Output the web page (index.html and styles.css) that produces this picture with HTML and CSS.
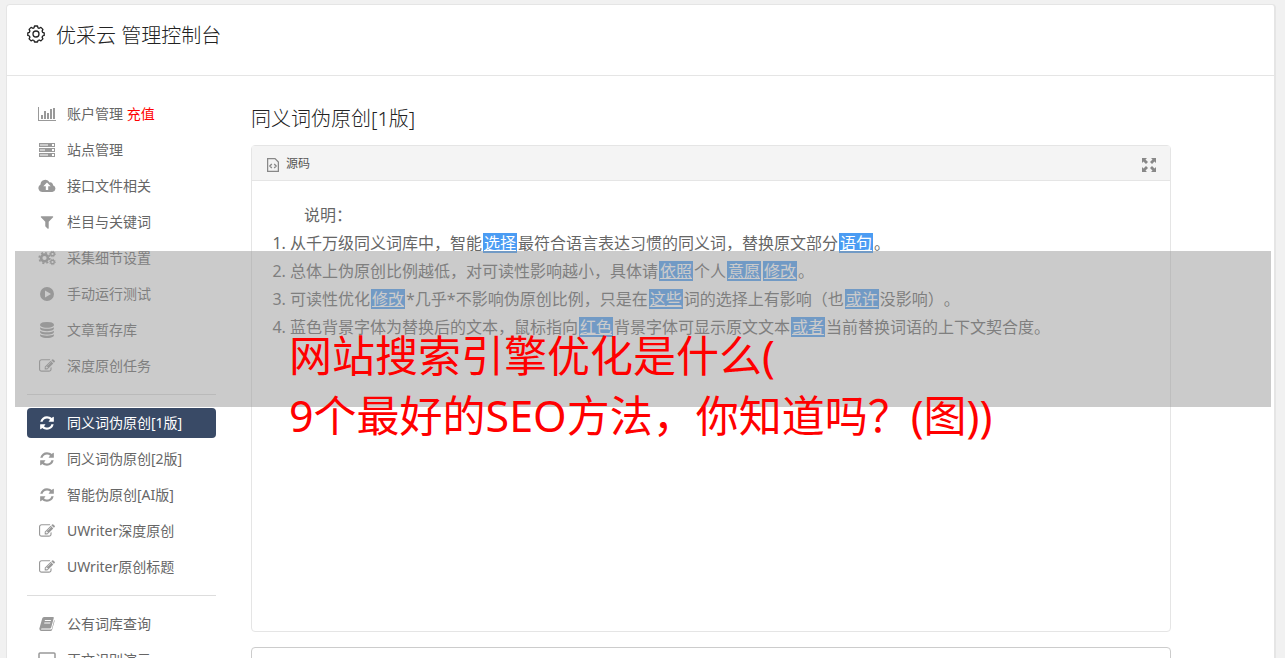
FILE: index.html
```html
<!DOCTYPE html>
<html lang="zh-CN">
<head>
  <meta charset="UTF-8" />
  <meta name="viewport" content="width=device-width, initial-scale=1.0"/>
  <title>优采云 管理控制台</title>
  <link rel="stylesheet" href="styles.css">
</head>
<body>
  <!-- icon set -->
  <svg class="sprite" aria-hidden="true">
    <symbol id="i-chart" viewBox="0 0 18 16"><path d="M0 1h1v13h17v1H0zM3 9h2v4H3zM6 5h2v8H6zM9 7h2v6H9zM12 3h2v10h-2zM15 2h2v11h-2z"/></symbol>
    <symbol id="i-server" viewBox="0 0 18 16"><path fill-rule="evenodd" d="M1 1h16v4H1zM2 2.500v1h8v-1zM14 2v2h2V2zM1 6h16v4H1zM2 7.500v1h5v-1zM14 7v2h2V7zM1 11h16v4H1zM2 12.500v1h8v-1zM14 12v2h2v-2z"/></symbol>
    <symbol id="i-cloud" viewBox="0 0 18 16"><path fill-rule="evenodd" d="M4.500 14A4 4 0 0 1 2.500 6.500 4.800 4.800 0 0 1 11.600 4.500 2.600 2.600 0 0 1 15 7.200 3.500 3.500 0 0 1 14.300 14zM9 4.500L5.300 8.300H7.800V12h2.400V8.300h2.500z"/></symbol>
    <symbol id="i-filter" viewBox="-112 0 2016 1792"><path d="M1595 295q17 41-14 70l-493 493v742q0 42-39 59-13 5-25 5-27 0-45-19l-256-256q-19-19-19-45v-486l-493-493q-31-29-14-70 17-39 59-39h1280q42 0 59 39z"/></symbol>
    <symbol id="i-cogs" viewBox="0 0 18 16"><g fill="none" stroke="currentColor"><circle cx="6.500" cy="8" r="3.400" stroke-width="2.600"/><circle cx="6.500" cy="8" r="5.300" stroke-width="1.700" stroke-dasharray="2.080 2.080"/><circle cx="14.500" cy="4" r="1.800" stroke-width="1.400"/><circle cx="14.500" cy="4" r="2.800" stroke-width="1" stroke-dasharray="1.100 1.100"/><circle cx="14.500" cy="12" r="1.800" stroke-width="1.400"/><circle cx="14.500" cy="12" r="2.800" stroke-width="1" stroke-dasharray="1.100 1.100"/></g></symbol>
    <symbol id="i-play" viewBox="0 0 18 16"><path fill-rule="evenodd" d="M9 1a7 7 0 1 0 0 14A7 7 0 0 0 9 1zM7 4.600L13 8l-6 3.400z"/></symbol>
    <symbol id="i-database" viewBox="-112 0 2016 1792"><path d="M896 768q237 0 443-43t325-127v170q0 69-103 128t-280 93.500-385 34.500-385-34.500-280-93.500-103-128v-170q119 84 325 127t443 43zm0 768q237 0 443-43t325-127v170q0 69-103 128t-280 93.500-385 34.500-385-34.500-280-93.500-103-128v-170q119 84 325 127t443 43zm0-384q237 0 443-43t325-127v170q0 69-103 128t-280 93.500-385 34.500-385-34.500-280-93.500-103-128v-170q119 84 325 127t443 43zm0-1152q208 0 385 34.500t280 93.500 103 128v128q0 69-103 128t-280 93.500-385 34.500-385-34.500-280-93.500-103-128v-128q0-69 103-128t280-93.500 385-34.500z"/></symbol>
    <symbol id="i-edit" viewBox="-112 0 2016 1792"><path d="M888 1184l116-116-152-152-116 116v56h96v96h56zm440-720q-16-16-33 1l-350 350q-17 17-1 33t33-1l350-350q17-17 1-33zm80 594v190q0 119-84.500 203.500t-203.500 84.500h-832q-119 0-203.500-84.500t-84.500-203.500v-832q0-119 84.500-203.500t203.500-84.500h832q63 0 117 25 15 7 18 23 3 17-9 29l-49 49q-14 14-32 8-23-6-45-6h-832q-66 0-113 47t-47 113v832q0 66 47 113t113 47h832q66 0 113-47t47-113v-126q0-13 9-22l64-64q15-15 35-7t20 29zm-96-738l288 288-672 672h-288v-288zm444 132l-92 92-288-288 92-92q28-28 68-28t68 28l152 152q28 28 28 68t-28 68z"/></symbol>
    <symbol id="i-refresh" viewBox="-112 0 2016 1792"><path d="M1639 1056q0 5-1 7-64 268-268 434.500t-478 166.500q-146 0-282.500-55t-243.500-157l-129 129q-19 19-45 19t-45-19-19-45v-448q0-26 19-45t45-19h448q26 0 45 19t19 45-19 45l-137 137q71 66 161 102t187 36q134 0 250-65t186-179q11-17 53-117 8-23 30-23h192q13 0 22.500 9.500t9.500 22.500zm25-800v448q0 26-19 45t-45 19h-448q-26 0-45-19t-19-45 19-45l138-138q-148-137-349-137-134 0-250 65t-186 179q-11 17-53 117-8 23-30 23h-199q-13 0-22.500-9.500t-9.500-22.500v-7q65-268 270-434.500t480-166.500q146 0 284 55.500t245 156.500l130-129q19-19 45-19t45 19 19 45z"/></symbol>
    <symbol id="i-book" viewBox="0 0 18 16"><path fill-rule="evenodd" d="M6 1h9q1 0 .8 1L13.200 11.500q-.3 1-1.200 1H4q-1.300 0-.9 1H13q.6 0 .9-.8L16.200 4q.6.300.4 1L14.200 13.500q-.4 1.500-1.800 1.500H3.500Q1.500 15 1.300 12.800L4.200 2.500Q4.600 1 6 1zM7 4l-.3 1h6l.3-1zM6.400 6.500l-.3 1h6l.3-1z"/></symbol>
    <symbol id="i-laptop" viewBox="0 0 18 16"><rect x="1" y="1" width="16" height="11" rx="1" fill="none" stroke="currentColor" stroke-width="1.500"/><path d="M0 13h18v2H0z"/></symbol>
  </svg>

  <div class="page">
    <header class="page-header">
      <svg class="gear" viewBox="0 0 18 18" fill="none" stroke="currentColor" stroke-width="1.300" stroke-linejoin="round" aria-hidden="true">
        <path d="M7.500 1h3l.5 1.800 1.200.5 1.700-.9 2 2-.8 1.700.5 1.200 1.600.6v2.500l-1.600.6-.5 1.200.8 1.700-2 2-1.700-.9-1.200.5-.5 1.500h-3l-.5-1.500-1.200-.5-1.700.9-2-2 .8-1.700-.5-1.200L.8 10.400V7.900l1.600-.6.5-1.200-.8-1.700 2-2 1.700.9L7 2.800z"/>
        <circle cx="9" cy="9" r="3"/>
      </svg>
      <h1>优采云 管理控制台</h1>
    </header>

    <div class="layout">
      <nav class="sidebar">
        <ul>
          <li><a href="#"><svg><use href="#i-chart"/></svg><span>账户管理 <em>充值</em></span></a></li>
          <li><a href="#"><svg><use href="#i-server"/></svg>站点管理</a></li>
          <li><a href="#"><svg><use href="#i-cloud"/></svg>接口文件相关</a></li>
          <li><a href="#"><svg><use href="#i-filter"/></svg>栏目与关键词</a></li>
          <li><a href="#"><svg><use href="#i-cogs"/></svg>采集细节设置</a></li>
          <li><a href="#"><svg><use href="#i-play"/></svg>手动运行测试</a></li>
          <li><a href="#"><svg><use href="#i-database"/></svg>文章暂存库</a></li>
          <li><a href="#"><svg><use href="#i-edit"/></svg>深度原创任务</a></li>
        </ul>
        <ul>
          <li><a href="#" class="active"><svg><use href="#i-refresh"/></svg>同义词伪原创[1版]</a></li>
          <li><a href="#"><svg><use href="#i-refresh"/></svg>同义词伪原创[2版]</a></li>
          <li><a href="#"><svg><use href="#i-refresh"/></svg>智能伪原创[AI版]</a></li>
          <li><a href="#"><svg><use href="#i-edit"/></svg>UWriter深度原创</a></li>
          <li><a href="#"><svg><use href="#i-edit"/></svg>UWriter原创标题</a></li>
        </ul>
        <ul>
          <li><a href="#"><svg><use href="#i-book"/></svg>公有词库查询</a></li>
          <li><a href="#"><svg><use href="#i-laptop"/></svg>正文识别演示</a></li>
        </ul>
      </nav>

      <main class="content">
        <h2>同义词伪原创[1版]</h2>
        <div class="editor">
          <div class="toolbar">
            <button type="button">
              <svg width="12" height="14" viewBox="0 0 12 14" fill="none" stroke="#888" stroke-width="1.300" aria-hidden="true"><path d="M.6.600h7.400l3.400 3.400v9.400H.6zM4.800 6L2.800 8l2 2M7.200 6l2 2-2 2"/></svg>
              源码
            </button>
            <button type="button" aria-label="全屏">
              <svg width="14" height="14" viewBox="0 0 14 14" fill="#888" aria-hidden="true"><path d="M0 0h5L3.500 1.500 6 4 4 6 1.500 3.500 0 5zM14 0v5l-1.500-1.500L10 6 8 4l2.500-2.500L9 0zM0 14V9l1.500 1.500L4 8l2 2-2.500 2.500L5 14zM14 14H9l1.500-1.500L8 10l2-2 2.500 2.500L14 9z"/></svg>
            </button>
          </div>
          <div class="editor-body">
            <p>说明：</p>
            <ol>
              <li>从千万级同义词库中，智能<u>选择</u>最符合语言表达习惯的同义词，替换原文部分<u>语句</u>。</li>
              <li>总体上伪原创比例越低，对可读性影响越小，具体请<u>依照</u>个人<u>意愿</u><u>修改</u>。</li>
              <li>可读性优化<u>修改</u>*几乎*不影响伪原创比例，只是在<u>这些</u>词的选择上有影响（也<u>或许</u>没影响）。</li>
              <li>蓝色背景字体为替换后的文本，鼠标指向<u>红色</u>背景字体可显示原文文本<u>或者</u>当前替换词语的上下文契合度。</li>
            </ol>
          </div>
        </div>
        <textarea class="source" aria-label="原文"></textarea>
      </main>
    </div>
  </div>

  <div class="banner">
    <p>网站搜索引擎优化是什么(<br>9个最好的SEO方法，你知道吗？(图))</p>
  </div>
</body>
</html>
```
FILE: styles.css
```css
* {
  box-sizing: border-box;
}
body {
  position: relative;
  margin: 0;
  padding: 4px 9px 0 6px;
  background: #f1f1f1;
  color: #666;
  font-family: "Noto Sans", "Noto Sans CJK SC", sans-serif;
  font-size: 14px;
  text-spacing-trim: space-all;
}
h1, h2, p, ul, ol {
  margin: 0;
  padding: 0;
  font-weight: normal;
}
.sprite {
  display: none;
}
.page {
  background: white;
  border: 1px solid #e5e5e5;
  border-right-width: 2px;
  border-radius: 4px;
}

/* header */
.page-header {
  display: flex;
  align-items: flex-start;
  gap: 11px;
  padding: 16px 20px 24px;
  border-bottom: 1px solid #e5e5e5;
  color: #222;
}
.page-header h1 {
  font-size: 20px;
  line-height: 30px;
  font-weight: 300;
}
.gear {
  width: 18px;
  height: 18px;
  margin-top: 4px;
}
.layout {
  display: flex;
  gap: 35px;
  padding: 23px 20px;
}

/* left menu */
.sidebar {
  flex: none;
  width: 189px;
}
.sidebar ul {
  display: flex;
  flex-direction: column;
  gap: 6px;
  list-style: none;
}
.sidebar ul + ul {
  margin-top: 13px;
  padding-top: 13px;
  border-top: 1px solid #ddd;
}
.sidebar a {
  display: flex;
  align-items: center;
  gap: 11px;
  padding: 0 11px;
  line-height: 30px;
  border-radius: 4px;
  color: #666;
  text-decoration: none;
}
.sidebar svg {
  width: 18px;
  height: 16px;
  color: #999;
  fill: currentColor;
}
.sidebar em {
  color: red;
  font-style: normal;
}
.sidebar .active,
.sidebar .active svg {
  background: #394a66;
  color: white;
}

/* editor */
.content {
  flex: 1;
  max-width: 920px;
}
.content h2 {
  padding: 5px 0 11px;
  color: #222;
  font-size: 20px;
  line-height: 30px;
  font-weight: 300;
}
.editor {
  min-height: 487px;
  border: 1px solid #e5e5e5;
  border-radius: 4px;
}
.toolbar {
  display: flex;
  justify-content: space-between;
  padding: 0 14px 0 15px;
  background: #f4f4f4;
  border-bottom: 1px solid #e5e5e5;
}
.toolbar button {
  display: flex;
  align-items: center;
  gap: 7px;
  height: 34px;
  padding: 0;
  border: 0;
  background: none;
  color: #555;
  font: inherit;
  font-size: 12px;
}
.toolbar svg {
  margin-top: 4px;
}
.editor-body {
  padding: 20px;
  font-size: 16px;
  line-height: 28px;
}
.editor-body p {
  text-indent: 2em;
}
.editor-body ol {
  padding-left: 18px;
}
.editor-body u {
  display: inline-block;
  margin: 0 1px;
  padding: 0 1px;
  background: #4b9cf3;
  color: white;
  line-height: 20px;
}
.source {
  display: block;
  width: 100%;
  height: 120px;
  margin-top: 15px;
  border: 1px solid #ccc;
  border-radius: 4px;
  resize: none;
}

/* caption band over the page */
.banner {
  position: absolute;
  top: 251px;
  left: 15px;
  right: 14px;
  height: 156px;
  padding: 75px 0 0 274px;
  background: rgba(151, 151, 151, 0.5);
  color: red;
  font-size: 43px;
  line-height: 60px;
}
```
